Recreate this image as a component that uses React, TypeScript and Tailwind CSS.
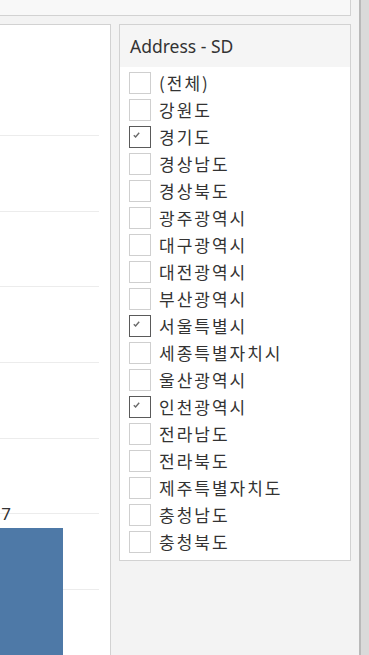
import React from "react";

const REGIONS: { name: string; checked?: boolean }[] = [
  { name: "(전체)" },
  { name: "강원도" },
  { name: "경기도", checked: true },
  { name: "경상남도" },
  { name: "경상북도" },
  { name: "광주광역시" },
  { name: "대구광역시" },
  { name: "대전광역시" },
  { name: "부산광역시" },
  { name: "서울특별시", checked: true },
  { name: "세종특별자치시" },
  { name: "울산광역시" },
  { name: "인천광역시", checked: true },
  { name: "전라남도" },
  { name: "전라북도" },
  { name: "제주특별자치도" },
  { name: "충청남도" },
  { name: "충청북도" },
];

const GRID = [110, 186, 261, 337, 413, 488, 564];

function Checkbox({ checked }: { checked?: boolean }) {
  return (
    <span
      className={
        "relative block h-[22px] w-[22px] shrink-0 border bg-white " +
        (checked ? "border-[#5a5a5a]" : "border-[#cfcfcf]")
      }
    >
      {checked && (
        <svg className="absolute left-[3px] top-[5px]" width="7" height="6" viewBox="0 0 7 6">
          <path d="M0.8 3.2 L2.6 5 L6.2 0.8" fill="none" stroke="#6a6a6a" strokeWidth="1.4" />
        </svg>
      )}
    </span>
  );
}

function Chart() {
  return (
    <div className="h-full w-[111px] shrink-0 border-r border-t border-[#d2d2d2] bg-white">
      <svg width="110" height="630" className="block">
        {GRID.map((y) => (
          <line key={y} x1="0" x2="99" y1={y + 0.5} y2={y + 0.5} stroke="#ececec" strokeWidth="1" />
        ))}
        <rect x="0" y="503" width="63" height="130" fill="#4e79a7" />
        <text x="11" y="495" textAnchor="end" fontSize="17" fill="#333" fontFamily="'Noto Sans', sans-serif">
          7
        </text>
      </svg>
    </div>
  );
}

function FilterCard() {
  return (
    <div className="flex h-[537px] w-[232px] shrink-0 flex-col border border-[#d2d2d2] bg-white">
      <div className="flex h-[42px] items-center bg-[#f5f5f5] pl-[10px] text-[17.5px] text-[#333] [font-family:'Noto_Sans',sans-serif]">
        Address - SD
      </div>
      <ul className="pt-[2px]">
        {REGIONS.map((r) => (
          <li key={r.name} className="flex h-[27px] items-center gap-[8px] pl-[9px]">
            <Checkbox checked={r.checked} />
            <span className="text-[17px] leading-none tracking-[2px] text-[#333] [font-family:'Noto_Sans_CJK_KR',sans-serif]">
              {r.name}
            </span>
          </li>
        ))}
      </ul>
    </div>
  );
}

export default function App() {
  return (
    <div className="flex h-[655px] w-[369px] overflow-hidden bg-[#f3f3f3]">
      <div className="flex w-[359px] flex-col">
        <div className="h-[16px] w-[351px] shrink-0 border-b border-r border-[#d2d2d2] bg-[#f8f8f8]" />
        <div className="mt-[8px] flex min-h-0 flex-1 items-start gap-[8px]">
          <Chart />
          <FilterCard />
        </div>
      </div>
      <div className="h-full w-[2px] bg-[#b9b9b9]" />
      <div className="h-full flex-1 bg-[#dadada]" />
    </div>
  );
}
